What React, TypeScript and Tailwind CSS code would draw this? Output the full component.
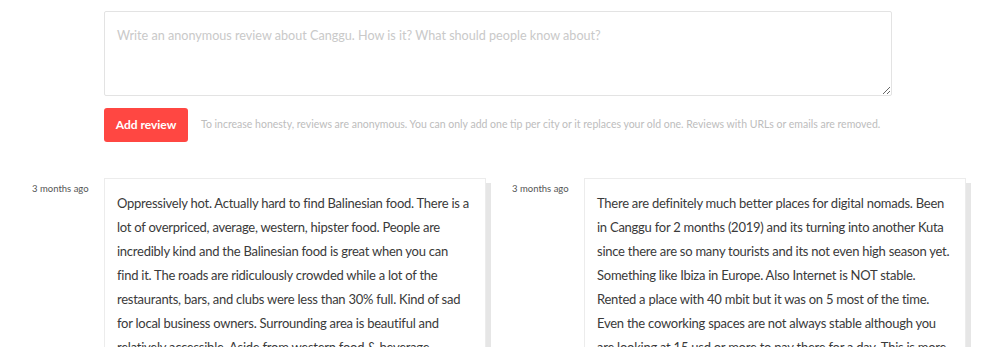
import React from 'react';

const reviews = [
  {
    when: '3 months ago',
    lines: [
      'Oppressively hot. Actually hard to find Balinesian food. There is a',
      'lot of overpriced, average, western, hipster food. People are',
      'incredibly kind and the Balinesian food is great when you can',
      'find it. The roads are ridiculously crowded while a lot of the',
      'restaurants, bars, and clubs were less than 30% full. Kind of sad',
      'for local business owners. Surrounding area is beautiful and',
      'relatively accessible. Aside from western food & beverage',
      'prices, it is still a good place to visit.',
    ],
  },
  {
    when: '3 months ago',
    lines: [
      'There are definitely much better places for digital nomads. Been',
      'in Canggu for 2 months (2019) and its turning into another Kuta',
      'since there are so many tourists and its not even high season yet.',
      'Something like Ibiza in Europe. Also Internet is NOT stable.',
      'Rented a place with 40 mbit but it was on 5 most of the time.',
      'Even the coworking spaces are not always stable although you',
      'are looking at 15 usd or more to pay there for a day. This is more',
      'expensive than most places in Europe.',
    ],
  },
];

export default function App() {
  return (
    <div className="w-[1000px] h-[347px] overflow-hidden bg-white font-['Lato','Noto_Sans',sans-serif] text-[#333]">
      {/* Form */}
      <div className="pl-[104px] pt-[11px] w-[892px]">
        <textarea
          placeholder="Write an anonymous review about Canggu. How is it? What should people know about?"
          className="block w-[788px] h-[85px] border border-[#e3e3e3] rounded-[2px] px-3 pt-[14px] text-[12.6px] leading-5 text-[#333] placeholder:text-[#c9c9c9] outline-none"
        />
        <div className="flex items-center gap-[13px] mt-[12px]">
          <button className="w-[84px] h-[34px] rounded-[3px] bg-[#ff4742] text-white text-[12px] font-bold shrink-0">
            Add review
          </button>
          <span className="text-[10.5px] text-[#bdbdbd] whitespace-nowrap">
            To increase honesty, reviews are anonymous. You can only add one tip per city or it replaces your old one. Reviews with URLs or emails are removed.
          </span>
        </div>
      </div>

      {/* Reviews */}
      <div className="grid grid-cols-[480px_480px] pl-8 mt-[36px]">
        {reviews.map((r, i) => (
          <div key={i} className="flex items-start">
            <div className="w-[72px] shrink-0 pt-[4px] text-[9.5px] text-[#555] whitespace-nowrap">{r.when}</div>
            <div className="w-[382px] bg-white border border-[#ececec] shadow-[5px_5px_0_#e6e6e6] px-3 pt-[12px] pb-3 text-[13px] leading-6 tracking-[-0.25px] text-[#3a3a3a]">
              {r.lines.map((l, j) => (
                <span key={j} className="block whitespace-nowrap">{l}</span>
              ))}
            </div>
          </div>
        ))}
      </div>
    </div>
  );
}
